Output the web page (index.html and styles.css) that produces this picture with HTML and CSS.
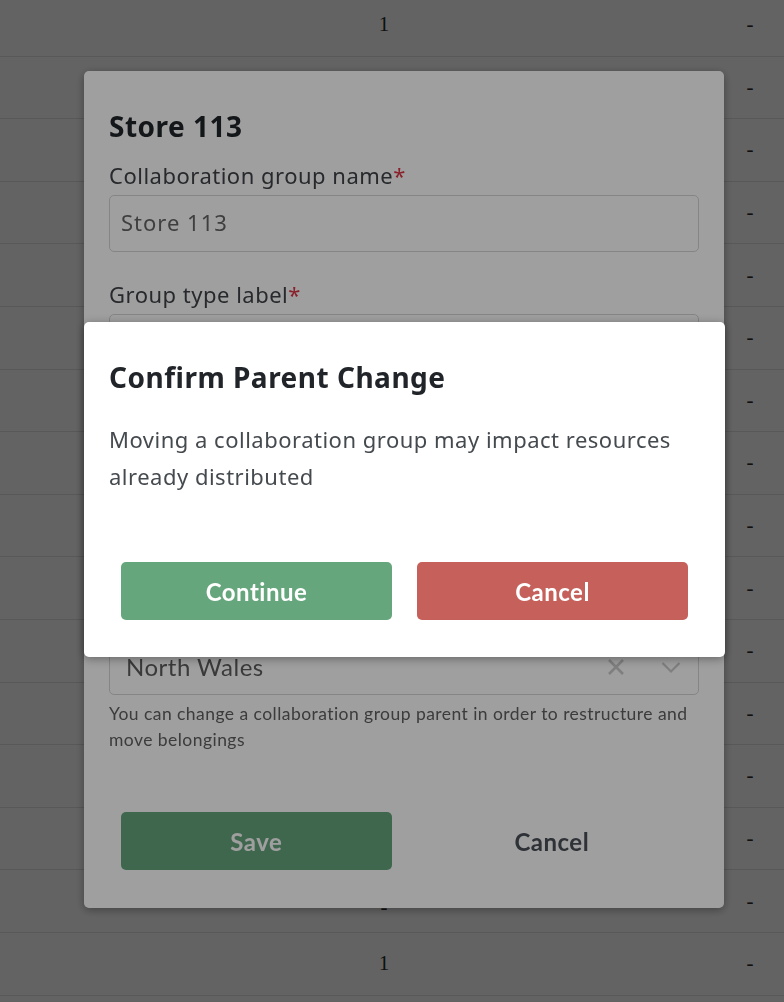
FILE: index.html
```html
<!DOCTYPE html>
<html lang="en">
<head>
<meta charset="utf-8">
<title>Confirm Parent Change</title>
<link rel="stylesheet" href="styles.css">
</head>
<body>
<div class="grid">
  <div class="row"><span></span><span class="num">1</span><span></span><span class="dash">-</span></div>
  <div class="row"><span></span><span class="num"></span><span></span><span class="dash">-</span></div>
  <div class="row"><span></span><span class="num"></span><span></span><span class="dash">-</span></div>
  <div class="row"><span></span><span class="num"></span><span></span><span class="dash">-</span></div>
  <div class="row"><span></span><span class="num"></span><span></span><span class="dash">-</span></div>
  <div class="row"><span></span><span class="num"></span><span></span><span class="dash">-</span></div>
  <div class="row"><span></span><span class="num"></span><span></span><span class="dash">-</span></div>
  <div class="row"><span></span><span class="num"></span><span></span><span class="dash">-</span></div>
  <div class="row"><span></span><span class="num"></span><span></span><span class="dash">-</span></div>
  <div class="row"><span></span><span class="num"></span><span></span><span class="dash">-</span></div>
  <div class="row"><span></span><span class="num"></span><span></span><span class="dash">-</span></div>
  <div class="row"><span></span><span class="num"></span><span></span><span class="dash">-</span></div>
  <div class="row"><span></span><span class="num"></span><span></span><span class="dash">-</span></div>
  <div class="row"><span></span><span class="num"></span><span></span><span class="dash">-</span></div>
  <div class="row"><span></span><span class="num num-low">-</span><span></span><span class="dash">-</span></div>
  <div class="row"><span></span><span class="num">1</span><span></span><span class="dash">-</span></div>
</div>

<div class="overlay"></div>

<div class="modal modal-edit">
  <h2 class="title">Store 113</h2>
  <div class="field">
    <label class="label">Collaboration group name<span class="req">*</span></label>
    <div class="input">Store 113</div>
  </div>
  <div class="field">
    <label class="label">Group type label<span class="req">*</span></label>
    <div class="input">Store</div>
  </div>
  <div class="field">
    <label class="label">Description</label>
    <div class="input textarea"></div>
  </div>
  <div class="field field-last">
    <label class="label">Parent collaboration group</label>
    <div class="input select">
      <span class="select-value">North Wales</span>
      <span class="select-icons">
        <svg class="icon-clear" width="20" height="20" viewBox="0 0 20 20"><path d="M3 3 L17 17 M17 3 L3 17" stroke="#cccccc" stroke-width="2.6" fill="none"/></svg>
        <svg class="icon-chevron" width="22" height="20" viewBox="0 0 22 20"><path d="M2.5 6 L11 14.5 L19.5 6" stroke="#cccccc" stroke-width="2.2" fill="none"/></svg>
      </span>
    </div>
    <p class="help">You can change a collaboration group parent in order to restructure and move belongings</p>
  </div>
  <div class="actions actions-edit">
    <button class="btn btn-save">Save</button>
    <button class="btn btn-plain">Cancel</button>
  </div>
</div>

<div class="overlay"></div>

<div class="modal modal-confirm">
  <h2 class="title">Confirm Parent Change</h2>
  <p class="body">Moving a collaboration group may impact resources already distributed</p>
  <div class="actions actions-confirm">
    <button class="btn btn-continue">Continue</button>
    <button class="btn btn-cancel">Cancel</button>
  </div>
</div>
</body>
</html>
```

FILE: styles.css
```css
* { box-sizing: border-box; }

html, body {
  margin: 0;
  padding: 0;
  width: 784px;
  height: 1002px;
  overflow: hidden;
  background: #ffffff;
}

.grid {
  margin-top: -6px;
}

.row {
  display: grid;
  grid-template-columns: 300px 168px 1fr 68px;
  align-items: center;
  height: 62.6px;
  border-bottom: 1px solid #e3e3e3;
  font-family: "Liberation Serif", serif;
  font-size: 21px;
  color: #2a2a2a;
}

.num, .dash {
  text-align: center;
}

.num-low {
  align-self: end;
  padding-bottom: 12px;
}

.overlay {
  position: fixed;
  inset: 0;
  background: rgba(0, 0, 0, 0.375);
}

.modal {
  position: fixed;
  left: 84px;
  background: #ffffff;
  border-radius: 5px;
  padding: 25px;
  box-shadow: 0 2px 10px rgba(0, 0, 0, 0.35);
  font-family: "Noto Sans", sans-serif;
}

.modal-edit {
  top: 71px;
  width: 640px;
}

.modal-confirm {
  top: 322px;
  width: 641px;
}

.title {
  margin: 15px 0 20px;
  font-size: 28px;
  line-height: 31px;
  letter-spacing: 0.5px;
  font-weight: 700;
  color: #212529;
}

.field {
  margin-bottom: 29px;
}

.label {
  display: block;
  font-size: 22px;
  line-height: 27px;
  letter-spacing: 0.5px;
  margin-bottom: 6px;
  color: #3f4347;
}

.req {
  color: #dc3545;
}

.input {
  height: 57px;
  border: 1px solid #d6d6d6;
  border-radius: 5px;
  padding: 0 11px 3px;
  display: flex;
  align-items: center;
  font-size: 22px;
  letter-spacing: 1px;
  color: #666666;
}

.textarea {
  height: 143px;
}

.select {
  padding: 0 16px 0 16px;
  justify-content: space-between;
  font-family: "Lato", sans-serif;
  font-size: 24px;
  letter-spacing: 0.5px;
  color: #5e5e5e;
}

.select-icons {
  display: flex;
  align-items: center;
  gap: 34px;
}

.field-last {
  margin-bottom: 0;
}

.help {
  margin: 6px 0 0;
  font-family: "Lato", sans-serif;
  font-size: 17.5px;
  letter-spacing: 0.45px;
  line-height: 26px;
  color: #606060;
}

.actions {
  display: grid;
  grid-template-columns: 1fr 1fr;
  gap: 25px;
  padding: 0 12px;
}

.actions-edit {
  margin: 59px 0 13px;
}

.actions-confirm {
  margin: 67.5px 0 12px;
}

.btn {
  height: 58px;
  border: 0;
  border-radius: 5px;
  font-family: "Lato", sans-serif;
  font-weight: 700;
  font-size: 24px;
  letter-spacing: 0.5px;
  color: #ffffff;
  background: transparent;
}

.btn-save,
.btn-continue {
  background: #65a67c;
}

.btn-cancel {
  background: #c5605a;
}

.btn-plain {
  color: #4a5058;
}

.body {
  margin: 27.5px 0 0;
  font-size: 22px;
  line-height: 37px;
  letter-spacing: 0.5px;
  color: #454a4f;
}
```
